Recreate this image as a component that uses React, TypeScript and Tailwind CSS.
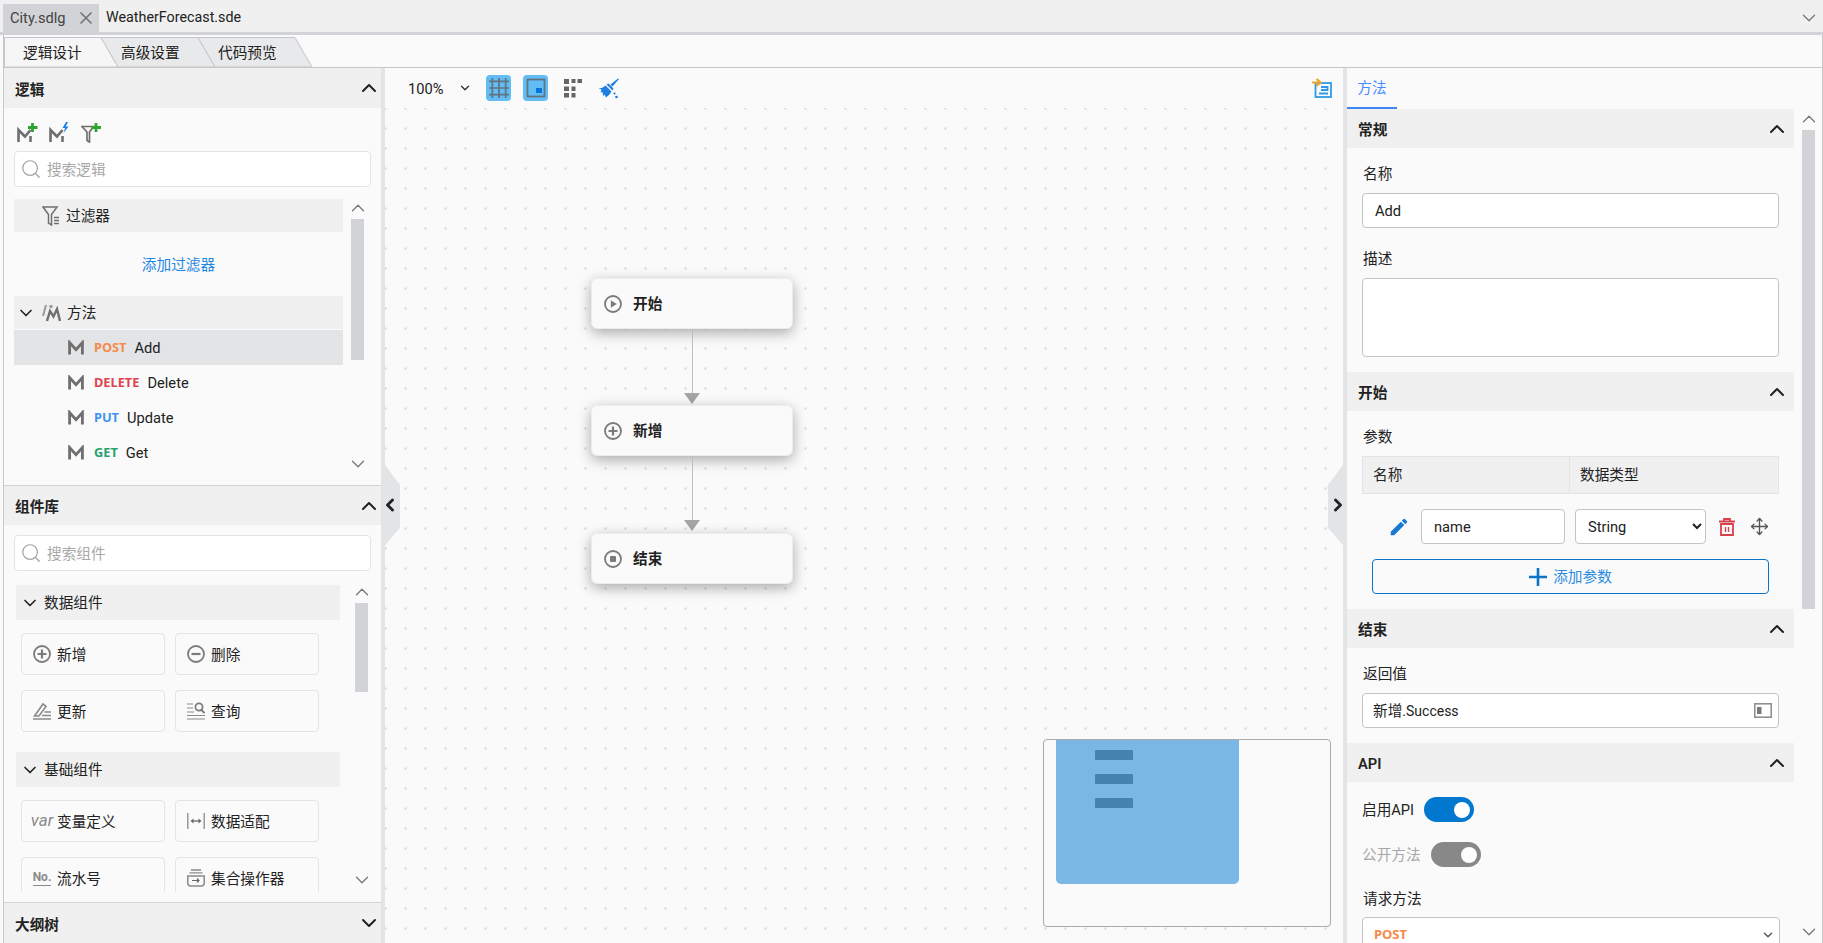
import { ChevronDown, ChevronLeft, ChevronRight, ChevronUp, Move, Search } from "lucide-react";
import type { ReactNode } from "react";
import { MdEdit } from "react-icons/md";

const GRAY = "#6f6f6f";

function MIcon({ className = "w-[18px] h-[16px]" }: { className?: string }) {
  return (
    <svg viewBox="0 0 18 16" className={className} fill="none">
      <path d="M1.800 16V2.500L9 10.500l7.200-8V16" stroke={GRAY} strokeWidth="3.200" />
    </svg>
  );
}

function MPlus() {
  return (
    <svg viewBox="0 0 21 21" className="h-[21px] w-[21px]" fill="none">
      <path d="M1.500 20V8l6.500 6.500L13.500 8" stroke={GRAY} strokeWidth="2.600" />
      <path d="M13.500 14v6" stroke={GRAY} strokeWidth="2.600" />
      <path d="M15.500 1v9M11 5.500h9.500" stroke="#2fa52f" strokeWidth="2.800" />
    </svg>
  );
}

function MBolt() {
  return (
    <svg viewBox="0 0 21 21" className="h-[21px] w-[21px]" fill="none">
      <path d="M1.500 20V8l6.500 6.500L13.500 8" stroke={GRAY} strokeWidth="2.600" />
      <path d="M13.500 14v6" stroke={GRAY} strokeWidth="2.600" />
      <path d="M17 0l-3.500 6h2.600l-1.600 5 5-6.500h-2.800L19 0z" fill="#1d7fe6" />
    </svg>
  );
}

function FunnelPlus() {
  return (
    <svg viewBox="0 0 21 21" className="h-[21px] w-[21px]" fill="none">
      <path d="M1 4.500h11.500L8.500 10v10l-2.500-1.500V10z" stroke={GRAY} strokeWidth="1.700" />
      <path d="M15 1v9M10.500 5.500h9.500" stroke="#2fa52f" strokeWidth="2.800" />
    </svg>
  );
}

function FunnelLines() {
  return (
    <svg viewBox="0 0 18 20" className="h-[20px] w-[18px]" fill="none">
      <path d="M1 1h14L9.500 8.500V19L6.500 17V8.500z" stroke={GRAY} strokeWidth="1.500" />
      <path d="M12 11.500h5M12 14.500h5M12 17.500h5" stroke={GRAY} strokeWidth="1.300" />
    </svg>
  );
}

function MultiM() {
  return (
    <svg viewBox="0 0 19 18" className="h-[18px] w-[19px]" fill="none">
      <path d="M1 12L4 1" stroke="#9a9a9a" strokeWidth="2" />
      <path d="M5 17l3-10 3.500 5.500L15 5l3 12" stroke={GRAY} strokeWidth="2.400" />
      <circle cx="9" cy="2.500" r="1.700" fill="#9a9a9a" />
    </svg>
  );
}

function CircleIcon({ kind, className = "h-[18px] w-[18px]" }: { kind: "play" | "plus" | "minus" | "stop"; className?: string }) {
  return (
    <svg viewBox="0 0 18 18" className={className} fill="none">
      <circle cx="9" cy="9" r="8" stroke="#7b7b7b" strokeWidth="1.800" />
      {kind === "play" && <path d="M6.800 5.300l6 3.700-6 3.700z" fill="#7b7b7b" />}
      {kind === "plus" && <path d="M9 4.500v9M4.500 9h9" stroke="#7b7b7b" strokeWidth="2.200" />}
      {kind === "minus" && <path d="M4.500 9h9" stroke="#7b7b7b" strokeWidth="2.200" />}
      {kind === "stop" && <rect x="6" y="6" width="6" height="6" rx="1" fill="#7b7b7b" />}
    </svg>
  );
}

function UpdateIcon() {
  return (
    <svg viewBox="0 0 18 18" className="h-[18px] w-[18px]" fill="none">
      <path d="M1.500 14L10 2l3 2.500-7 9.500z" stroke="#8a8a8a" strokeWidth="1.600" />
      <path d="M9 13.500h9M11.500 10h6.500M0 17h18" stroke="#8a8a8a" strokeWidth="1.300" />
    </svg>
  );
}

function QueryIcon() {
  return (
    <svg viewBox="0 0 18 18" className="h-[18px] w-[18px]" fill="none">
      <path d="M0 2h6M0 6h6M0 10h7M0 13.500h18M0 17h18" stroke="#8a8a8a" strokeWidth="1.200" />
      <circle cx="12" cy="5" r="3.600" stroke="#7a7a7a" strokeWidth="1.700" />
      <path d="M14.500 8l3 3" stroke="#7a7a7a" strokeWidth="1.800" />
    </svg>
  );
}

function AdapterIcon() {
  return (
    <svg viewBox="0 0 18 18" className="h-[18px] w-[18px]" fill="none">
      <path d="M.800 1v16M17.200 1v16" stroke="#8a8a8a" strokeWidth="1.300" />
      <path d="M5.500 9h7" stroke="#666" strokeWidth="1.300" />
      <path d="M3.500 9l3-2.500v5zM14.500 9l-3-2.500v5z" fill="#666" />
    </svg>
  );
}

function CollectionIcon() {
  return (
    <svg viewBox="0 0 18 18" className="h-[18px] w-[18px]" fill="none">
      <path d="M4 1h10M2.500 3.800h13" stroke="#8a8a8a" strokeWidth="1.300" />
      <path d="M.800 7h16.400v7a3 3 0 0 1-3 3H3.800a3 3 0 0 1-3-3z" stroke="#8a8a8a" strokeWidth="1.500" />
      <path d="M5 11.500h7M10 9.500l2 2-2 2" stroke="#666" strokeWidth="1.200" />
    </svg>
  );
}

function SubTab({ label, active, first }: { label: string; active?: boolean; first?: boolean }) {
  return (
    <div className={`relative h-[30px] w-[114px] ${first ? "" : "-ml-[17px]"}`}>
      <svg viewBox="0 0 114 30" className="absolute inset-0 h-full w-full">
        <polygon
          points={first ? "0.5,30 0.5,0.5 97,0.5 114,30" : "17,30 0,0.5 97,0.5 114,30"}
          fill={active ? "#f6f6f6" : "#e8e9eb"}
          stroke="#c4c5c8"
        />
      </svg>
      <span className={`relative block pt-[4px] leading-[24px] ${first ? "pl-[19px]" : "pl-[20px]"}`}>{label}</span>
    </div>
  );
}

function SearchBox({ placeholder }: { placeholder: string }) {
  return (
    <div className="mx-[10px] flex h-[36px] items-center rounded-[4px] border border-[#e3e4e6] bg-white pl-[5px] text-[#a8a8a8]">
      <Search size={22} strokeWidth={1.300} className="text-[#a0a0a0]" />
      <span className="ml-[5px] pt-[1px]">{placeholder}</span>
    </div>
  );
}

function Scrollbar({ thumbTop, thumbHeight, bottomPad }: { thumbTop: number; thumbHeight: number; bottomPad: number }) {
  return (
    <div className="flex h-full w-[13px] flex-col items-center text-[#777]">
      <div className="flex items-end justify-center overflow-hidden" style={{ height: thumbTop }}>
        <ChevronUp size={22} strokeWidth={1.400} className="shrink-0" />
      </div>
      <div className="w-[13px] shrink-0 bg-[#d2d3d7]" style={{ height: thumbHeight }} />
      <div className="flex-1" />
      <div style={{ paddingBottom: bottomPad }}>
        <ChevronDown size={22} strokeWidth={1.400} />
      </div>
    </div>
  );
}

function PanelHeader({ title, open = true, h = "h-[40px]" }: { title: string; open?: boolean; h?: string }) {
  return (
    <div className={`flex ${h} shrink-0 items-center justify-between bg-[#f0f0f0] pl-[11px] font-semibold text-[#222]`}>
      <span className="pt-[3px]">{title}</span>
      {open ? <ChevronUp size={24} strokeWidth={2} /> : <ChevronDown size={24} strokeWidth={2} />}
    </div>
  );
}

function MethodRow({ verb, color, name, active }: { verb: string; color: string; name: string; active?: boolean }) {
  return (
    <div className={`flex h-[35px] items-center pl-[54px] ${active ? "bg-[#e3e4e6]" : ""}`}>
      <MIcon className="h-[15px] w-[16px]" />
      <span className="ml-[10px] font-['Noto_Sans'] text-[12.800px] font-bold" style={{ color }}>
        {verb}
      </span>
      <span className="ml-[8px]">{name}</span>
    </div>
  );
}

function GroupHeader({ title }: { title: string }) {
  return (
    <div className="flex h-[35px] w-[324px] items-center bg-[#f0f0f0] pl-[4px]">
      <ChevronDown size={20} strokeWidth={2} />
      <span className="ml-[4px] pt-[1px]">{title}</span>
    </div>
  );
}

function CompButton({ icon, label }: { icon: ReactNode; label: string }) {
  return (
    <div className="flex h-[42px] w-[144px] items-center rounded-[4px] border border-[#e3e4e6] pl-[11px]">
      <span className="flex w-[18px] shrink-0 justify-center">{icon}</span>
      <span className="ml-[6px] pt-[1px]">{label}</span>
    </div>
  );
}

function CompGrid({ children, className = "" }: { children: ReactNode; className?: string }) {
  return <div className={`ml-[5px] grid w-[298px] grid-cols-2 gap-x-[10px] gap-y-[15px] pt-[13px] ${className}`}>{children}</div>;
}

function LeftPanel() {
  return (
    <div className="flex w-[377px] shrink-0 flex-col">
      <PanelHeader title="逻辑" />
      <div className="flex h-[378px] shrink-0 flex-col border-b border-[#d2d3d7]">
        <div className="flex h-[43px] shrink-0 items-center gap-[11px] pl-[13px] pt-[5px]">
          <MPlus />
          <MBolt />
          <FunnelPlus />
        </div>
        <SearchBox placeholder="搜索逻辑" />
        <div className="mt-[12px] flex h-[286px] pl-[10px]">
          <div className="w-[329px]">
            <div className="flex h-[33px] items-center bg-[#f0f0f0] pl-[28px]">
              <FunnelLines />
              <span className="ml-[6px] pt-[1px]">过滤器</span>
            </div>
            <div className="flex h-[64px] items-center justify-center pt-[1px] text-[#1e88e5]">添加过滤器</div>
            <div className="flex h-[33px] items-center bg-[#f0f0f0] pl-[2px]">
              <ChevronDown size={20} strokeWidth={2} />
              <span className="ml-[6px] flex">
                <MultiM />
              </span>
              <span className="ml-[6px] pt-[1px]">方法</span>
            </div>
            <div className="mt-[1px]">
              <MethodRow verb="POST" color="#f58a4b" name="Add" active />
              <MethodRow verb="DELETE" color="#e0434f" name="Delete" />
              <MethodRow verb="PUT" color="#3f92f5" name="Update" />
              <MethodRow verb="GET" color="#27a06c" name="Get" />
            </div>
          </div>
          <div className="ml-[8px]">
            <Scrollbar thumbTop={20} thumbHeight={141} bottomPad={10} />
          </div>
        </div>
      </div>
      <PanelHeader title="组件库" h="h-[39px]" />
      <div className="flex h-[378px] shrink-0 flex-col border-b border-[#d2d3d7] pt-[10px]">
        <SearchBox placeholder="搜索组件" />
        <div className="mt-[14px] flex h-[307px] pl-[12px]">
          <div className="h-full w-[335px] overflow-hidden">
            <GroupHeader title="数据组件" />
            <CompGrid>
              <CompButton icon={<CircleIcon kind="plus" />} label="新增" />
              <CompButton icon={<CircleIcon kind="minus" />} label="删除" />
              <CompButton icon={<UpdateIcon />} label="更新" />
              <CompButton icon={<QueryIcon />} label="查询" />
            </CompGrid>
            <div className="h-[20px]" />
            <GroupHeader title="基础组件" />
            <CompGrid>
              <CompButton icon={<span className="text-[17px] italic text-[#8a8a8a]">var</span>} label="变量定义" />
              <CompButton icon={<AdapterIcon />} label="数据适配" />
              <CompButton
                icon={<span className="border-b border-[#8a8a8a] text-[12px] font-bold leading-[15px] text-[#8a8a8a]">No.</span>}
                label="流水号"
              />
              <CompButton icon={<CollectionIcon />} label="集合操作器" />
            </CompGrid>
          </div>
          <div className="ml-[4px]">
            <Scrollbar thumbTop={18} thumbHeight={89} bottomPad={1} />
          </div>
        </div>
      </div>
      <PanelHeader title="大纲树" open={false} />
    </div>
  );
}

function FlowNode({ top, icon, label }: { top: number; icon: ReactNode; label: string }) {
  return (
    <div
      className="absolute left-[206px] flex h-[51px] w-[202px] items-center rounded-[6px] border border-[#ececec] bg-[#fafafa] pl-[12px] font-semibold text-[#222] shadow-[0_4px_14px_rgba(0,0,0,0.32)]"
      style={{ top }}
    >
      {icon}
      <span className="ml-[11px]">{label}</span>
    </div>
  );
}

function Connector({ top }: { top: number }) {
  return (
    <div className="absolute left-[299px] flex w-[16px] flex-col items-center" style={{ top }}>
      <div className="h-[64px] w-px bg-[#bdbdbd]" />
      <svg viewBox="0 0 16 11" className="h-[11px] w-[16px]">
        <polygon points="0,0 16,0 8,11" fill="#a5a5a5" />
      </svg>
    </div>
  );
}

function Canvas() {
  return (
    <div className="relative min-w-0 flex-1 bg-[#fafafa] bg-[radial-gradient(circle,#d4d4d4_1px,transparent_1.200px)] bg-[size:20px_20px] bg-[position:10.500px_10.500px]">
      <div className="flex h-[40px] items-center bg-[#fafafa] pl-[23px]">
        <span className="pt-[1px] text-[#222]">100%</span>
        <ChevronDown size={14} strokeWidth={2.400} className="ml-[15px] text-[#333]" />
        <div className="ml-[14px] flex h-[26px] w-[25px] items-center justify-center rounded-[4px] bg-[#62bdf5]">
          <svg viewBox="0 0 20 20" className="h-[20px] w-[20px]" fill="none">
            <path d="M3.300 0v20M10 0v20M16.700 0v20M0 3.300h20M0 10h20M0 16.700h20" stroke="#607480" strokeWidth="1.700" />
          </svg>
        </div>
        <div className="ml-[12px] flex h-[26px] w-[25px] items-center justify-center rounded-[4px] bg-[#62bdf5]">
          <svg viewBox="0 0 20 20" className="h-[20px] w-[20px]" fill="none">
            <rect x="1.500" y="1.500" width="17" height="17" stroke="#5f7482" strokeWidth="1.800" />
            <rect x="10" y="10" width="6" height="5" fill="#0a73d9" />
          </svg>
        </div>
        <svg viewBox="0 0 20 20" className="ml-[15px] h-[20px] w-[20px]">
          <path d="M1 1h5v5H1zM8.500 1h4v4h-4zM14.500 1h4.500v4h-4.500zM1 8.500h5v4.500H1zM8.500 8.500h4v4.500h-4zM1 15h5v4.500H1zM8.500 15h4v4.500h-4z" fill="#666" />
        </svg>
        <svg viewBox="0 0 21 21" className="ml-[15px] h-[21px] w-[21px]" fill="#1e7fe0">
          <path d="M20 .5l-7.500 6 2 2 6.500-7.500z" />
          <path d="M10.500 5.500l5 5-1 2-6-6z" />
          <path d="M7.500 7.500L13.500 13.500C12 16 10 18 8 19.500L6.500 16.500 5 18 4.500 14 2.500 14.500 3.500 11.500.5 10.500C3 10.500 5.500 9.500 7.500 7.500z" />
          <circle cx="16.500" cy="15.500" r="1.100" />
          <circle cx="18.500" cy="19" r="1.300" />
        </svg>
        <svg viewBox="0 0 20 20" className="ml-auto mr-[11px] h-[20px] w-[20px]" fill="none">
          <rect x="3.500" y="5" width="15.500" height="14" stroke="#2f9be8" strokeWidth="1.800" />
          <path d="M9 9h6.500v3H9M7 15.500h9" stroke="#2f9be8" strokeWidth="1.800" />
          <path d="M0 4.500h6M4.500 1l4 3.500-4 3.500" stroke="#eea52a" strokeWidth="2.200" />
        </svg>
      </div>

      <FlowNode top={210} icon={<CircleIcon kind="play" />} label="开始" />
      <Connector top={261} />
      <FlowNode top={337} icon={<CircleIcon kind="plus" />} label="新增" />
      <Connector top={388} />
      <FlowNode top={465} icon={<CircleIcon kind="stop" />} label="结束" />

      <div className="absolute left-[658px] top-[671px] h-[188px] w-[288px] overflow-hidden rounded-[4px] border border-[#ababab] bg-[#fafafa]">
        <div className="ml-[12px] h-[144px] w-[183px] rounded-b-[5px] bg-[#7bb7e5] pl-[39px] pt-[10px]">
          <div className="h-[10px] w-[38px] rounded-[1px] bg-[#4682b0]" />
          <div className="mt-[14px] h-[10px] w-[38px] rounded-[1px] bg-[#4682b0]" />
          <div className="mt-[14px] h-[10px] w-[38px] rounded-[1px] bg-[#4682b0]" />
        </div>
      </div>

      <div className="absolute left-0 top-[397px] flex h-[80px] w-[15px] items-center justify-center bg-[#e3e4e6] [clip-path:polygon(0_0,100%_20px,100%_63px,0_100%)]">
        <ChevronLeft size={20} strokeWidth={3.400} className="relative -left-[3px] shrink-0 text-[#222]" />
      </div>
      <div className="absolute right-0 top-[397px] flex h-[80px] w-[15px] items-center justify-center bg-[#e3e4e6] [clip-path:polygon(100%_0,0_20px,0_63px,100%_100%)]">
        <ChevronRight size={20} strokeWidth={3.400} className="relative left-[2px] shrink-0 text-[#222]" />
      </div>
    </div>
  );
}

function SectionHeader({ title }: { title: string }) {
  return (
    <div className="flex h-[39px] items-center justify-between bg-[#f0f0f0] pl-[11px] pr-[5px] font-semibold text-[#222]">
      <span className="pt-[3px]">{title}</span>
      <ChevronUp size={24} strokeWidth={2} />
    </div>
  );
}

const fieldClass =
  "block h-[35px] w-full rounded-[4px] border border-[#c4c4c4] bg-white px-[12px] text-[14.670px] text-[#222] outline-none";

function Toggle({ color }: { color: string }) {
  return (
    <div className={`flex h-[25px] w-[50px] items-center justify-end rounded-full pr-[4px] ${color}`}>
      <div className="h-[16px] w-[16px] rounded-full bg-white" />
    </div>
  );
}

function RightPanel() {
  return (
    <div className="flex w-[475px] shrink-0 flex-col overflow-hidden">
      <div className="flex h-[41px] shrink-0 items-start">
        <div className="flex h-[41px] w-[50px] items-center justify-center border-b-2 border-[#3f86f0] text-[#4a8cff]">方法</div>
      </div>
      <div className="flex min-h-0 flex-1">
        <div className="w-[447px] shrink-0">
          <SectionHeader title="常规" />
          <div className="px-[15px] pb-[15px] pt-[15px]">
            <div className="h-[20px] pl-[1px] leading-[22px]">名称</div>
            <input readOnly value="Add" className={`mt-[10px] ${fieldClass}`} />
            <div className="mt-[20px] h-[20px] pl-[1px] leading-[22px]">描述</div>
            <textarea readOnly className="mt-[10px] block h-[79px] w-full resize-none rounded-[4px] border border-[#c4c4c4] bg-white outline-none" />
          </div>
          <SectionHeader title="开始" />
          <div className="px-[15px] pb-[15px] pt-[15px]">
            <div className="h-[20px] pl-[1px] leading-[22px]">参数</div>
            <div className="mt-[10px] grid h-[38px] grid-cols-[207px_1fr] border border-[#e3e4e6] bg-[#f0f0f0]">
              <div className="flex items-center border-r border-[#e3e4e6] pl-[10px]">名称</div>
              <div className="flex items-center pl-[10px]">数据类型</div>
            </div>
            <div className="mt-[15px] flex h-[35px] items-center pl-[26px]">
              <MdEdit size={22} className="text-[#1877d2]" />
              <input readOnly value="name" className={`ml-[11px] w-[144px]! ${fieldClass}`} />
              <select
                defaultValue="String"
                className="ml-[10px] h-[35px] w-[131px] rounded-[4px] border border-[#c4c4c4] bg-white px-[8px] text-[14.670px] text-[#222] outline-none"
              >
                <option>String</option>
              </select>
              <svg viewBox="0 0 18 18" className="ml-[12px] h-[18px] w-[18px]" fill="none">
                <path d="M6 2.500V1h6v1.500M1 3.500h16" stroke="#d8404c" strokeWidth="1.800" />
                <path d="M3 6h12v11H3z" stroke="#d8404c" strokeWidth="1.800" />
                <path d="M7.500 9v5M10.500 9v5" stroke="#d8404c" strokeWidth="1.400" />
              </svg>
              <Move size={19} strokeWidth={1.700} className="ml-[14px] text-[#555]" />
            </div>
            <div className="mx-[10px] mt-[15px] flex h-[35px] items-center justify-center rounded-[4px] border border-[#0a74c9] text-[#2a8be0]">
              <svg viewBox="0 0 18 18" className="h-[18px] w-[18px]" fill="none">
                <path d="M9 0v18M0 9h18" stroke="#0a74c9" strokeWidth="2.600" />
              </svg>
              <span className="ml-[6px]">添加参数</span>
            </div>
          </div>
          <SectionHeader title="结束" />
          <div className="px-[15px] pb-[15px] pt-[15px]">
            <div className="h-[20px] pl-[1px] leading-[22px]">返回值</div>
            <div className="mt-[10px] flex h-[35px] items-center justify-between rounded-[4px] border border-[#c4c4c4] bg-white pl-[10px] pr-[6px]">
              <span>
                新增<span className="text-[14px]">.Success</span>
              </span>
              <svg viewBox="0 0 18 15" className="h-[15px] w-[18px]" fill="none">
                <rect x="0.800" y="0.800" width="16.400" height="13.400" stroke="#8a8a8a" strokeWidth="1.500" />
                <rect x="3" y="4" width="4.500" height="7" fill="#7a7a7a" />
              </svg>
            </div>
          </div>
          <SectionHeader title="API" />
          <div className="px-[15px] pt-[15px]">
            <div className="flex h-[25px] items-center gap-[10px]">
              <span className="pt-[1px]">启用API</span>
              <Toggle color="bg-[#0078d0]" />
            </div>
            <div className="mt-[20px] flex h-[25px] items-center gap-[10px]">
              <span className="pt-[1px] text-[#a8a8a8]">公开方法</span>
              <Toggle color="bg-[#888888]" />
            </div>
            <div className="mt-[21px] h-[20px] pl-[1px] leading-[22px]">请求方法</div>
            <div className="mt-[9px] flex h-[35px] w-[418px] items-center justify-between rounded-[4px] border border-[#c4c4c4] bg-white pl-[11px] pr-[4px]">
              <span className="font-['Noto_Sans'] text-[13px] font-bold text-[#f58a4b]">POST</span>
              <ChevronDown size={14} strokeWidth={2.400} className="text-[#555]" />
            </div>
          </div>
        </div>
        <div className="ml-[8px]">
          <Scrollbar thumbTop={21} thumbHeight={479} bottomPad={0} />
        </div>
      </div>
    </div>
  );
}

export default function App() {
  return (
    <div className="h-[943px] w-[1823px] overflow-hidden bg-[#fafafa] font-['Roboto','Noto_Sans_CJK_SC',sans-serif] text-[14.670px] text-[#222]">
      <div className="flex h-[35px] items-start border-b-[3px] border-[#d2d3d7] bg-[#f0f0f0] pl-[3px] pt-[4px]">
        <div className="flex h-[28px] w-[96px] items-center justify-between bg-[#d2d3d7] pl-[7px] pr-[7px] text-[#444]">
          <span>City.sdlg</span>
          <svg viewBox="0 0 12 12" className="h-[12px] w-[12px]" fill="none">
            <path d="M.500.500l11 11M11.500.500l-11 11" stroke="#6f6f6f" strokeWidth="1.500" />
          </svg>
        </div>
        <div className="flex h-[28px] items-center pl-[7px] text-[14.300px]">WeatherForecast.sde</div>
        <ChevronDown size={22} strokeWidth={1.400} className="ml-auto mr-[3px] mt-[3px] text-[#777]" />
      </div>
      <div className="ml-[3px] flex h-[908px] flex-col border-l border-r border-[#c8c8c8]">
        <div className="flex h-[33px] shrink-0 items-start border-b border-[#c8c8c8] pt-[2px]">
          <SubTab label="逻辑设计" active first />
          <SubTab label="高级设置" />
          <SubTab label="代码预览" />
        </div>
        <div className="flex h-[875px] min-h-0">
          <LeftPanel />
          <div className="w-[4px] shrink-0 bg-[#e3e4e6]" />
          <Canvas />
          <div className="w-[4px] shrink-0 bg-[#e3e4e6]" />
          <RightPanel />
        </div>
      </div>
    </div>
  );
}
